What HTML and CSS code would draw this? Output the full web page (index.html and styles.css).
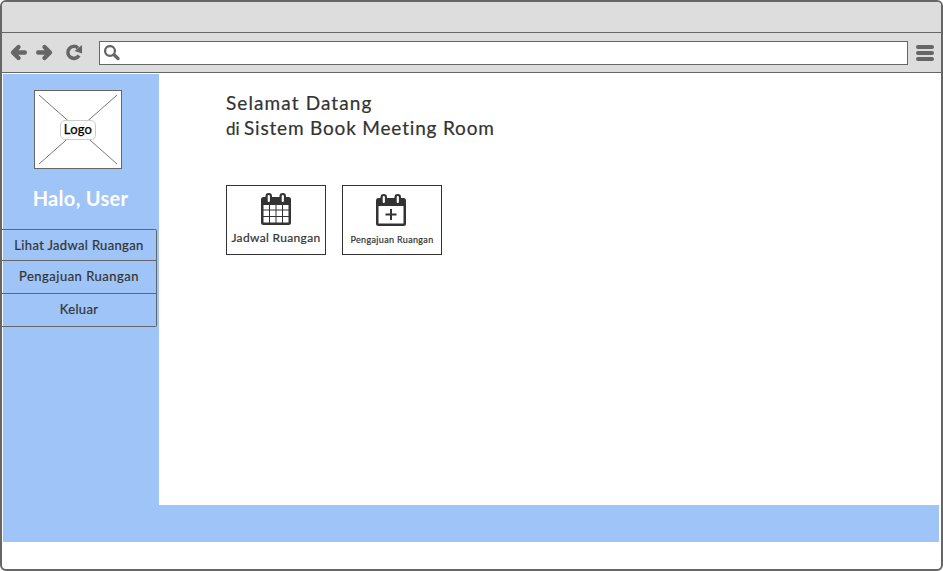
FILE: index.html
```html
<!DOCTYPE html>
<html lang="id">
<head>
<meta charset="utf-8">
<title>Sistem Book Meeting Room</title>
<link rel="stylesheet" href="styles.css">
</head>
<body>
<div class="window">
  <div class="titlebar"></div>
  <div class="toolbar">
    <svg class="nav" width="92" height="39" viewBox="0 0 92 39" fill="none" stroke="#666" stroke-width="4.400" stroke-linecap="round" stroke-linejoin="round">
      <path d="M16.500 14L11 19.500L16.500 25M11.500 19.500H22.800"/>
      <path d="M42.500 14L48 19.500L42.500 25M47.500 19.500H36.200"/>
      <path d="M76 15A6 6 0 1 0 77 22.500" stroke-width="3.500" stroke-linecap="butt"/>
      <path d="M80 12V20.500L72.500 18Z" fill="#666" stroke="none"/>
    </svg>
    <div class="address">
      <svg width="18" height="18" viewBox="0 0 18 18" fill="none" stroke="#666">
        <circle cx="6" cy="6" r="4.900" stroke-width="2.300"/>
        <path d="M10 9.800L14 13.500" stroke-width="3.400" stroke-linecap="round"/>
      </svg>
    </div>
    <div class="burger"><span></span><span></span><span></span></div>
  </div>
  <div class="page">
    <aside class="sidebar">
      <div class="logo">
        <svg class="cross" width="86" height="77" viewBox="0 0 86 77" stroke="#777" stroke-width="1"><path d="M4 4L82 73M82 4L4 73"/></svg>
        <span class="logo-label">Logo</span>
      </div>
      <h2 class="greeting">Halo, User</h2>
      <nav class="menu">
        <a class="item item-schedule">Lihat Jadwal Ruangan</a>
        <a class="item item-request">Pengajuan Ruangan</a>
        <a class="item item-exit">Keluar</a>
      </nav>
    </aside>
    <main class="content">
      <h1 class="welcome"><span class="line1">Selamat Datang</span><span class="line2"><span class="di">di</span><span class="name">Sistem Book Meeting Room</span></span></h1>
      <div class="cards">
        <div class="card">
          <svg width="32" height="34" viewBox="0 0 32 34">
            <rect x="1" y="4" width="30" height="28" rx="2.500" fill="#333"/>
            <path d="M3.500 12h5.500v4.500H3.500zM10 12h5.500v4.500H10zM16.500 12H22v4.500h-5.500zM23 12h5.500v4.500H23zM3.500 17.500H9v5.500H3.500zM10 17.500h5.500v5.500H10zM16.500 17.500H22v5.500h-5.500zM23 17.500h5.500v5.500H23zM3.500 24H9v5.500H3.500zM10 24h5.500v5.500H10zM16.500 24H22v5.500h-5.500zM23 24h5.500v5.500H23z" fill="#fff"/>
            <rect x="5.500" y="0" width="6.500" height="10" rx="3.200" fill="#333"/><rect x="19.500" y="0" width="6.500" height="10" rx="3.200" fill="#333"/>
            <path d="M8.800 3v5M22.800 3v5" stroke="#fff" stroke-width="2.200" stroke-linecap="round"/>
          </svg>
          <span class="label">Jadwal Ruangan</span>
        </div>
        <div class="card card-request">
          <svg width="32" height="34" viewBox="0 0 32 34">
            <rect x="1" y="4" width="30" height="28" rx="2.500" fill="#333"/>
            <path d="M3.500 12h25v17.500h-25z" fill="#fff"/>
            <path d="M16 15v11M10.500 20.500h11" stroke="#333" stroke-width="2"/>
            <rect x="5.500" y="0" width="6.500" height="10" rx="3.200" fill="#333"/><rect x="19.500" y="0" width="6.500" height="10" rx="3.200" fill="#333"/>
            <path d="M8.800 3v5M22.800 3v5" stroke="#fff" stroke-width="2.200" stroke-linecap="round"/>
          </svg>
          <span class="label label-small">Pengajuan Ruangan</span>
        </div>
      </div>
    </main>
    <footer class="footer"></footer>
  </div>
</div>
</body>
</html>
```
FILE: styles.css
```css
* { box-sizing: border-box; }
body { margin: 0; background: #fff; color: #333; font-family: Lato, "Liberation Sans", sans-serif; font-weight: 400; }
svg { display: block; flex: none; }
.window { width: 943px; height: 571px; border: 2px solid #666; border-radius: 6px; overflow: hidden; }
.titlebar { height: 31px; background: #ddd; border-bottom: 1px solid #666; }
.toolbar { height: 40px; display: flex; align-items: center; background: #ddd; border-bottom: 1px solid #666; }
.nav { margin-right: 5px; }
.address { width: 809px; height: 24px; background: #fff; border: 1px solid #666; padding: 3px 4px; }
.burger { display: flex; flex-direction: column; gap: 2px; margin: 1px 0 0 8px; }
.burger span { width: 18px; height: 4px; border-radius: 2px; background: #666; }
.page { display: grid; grid-template-columns: 156px 1fr; grid-template-rows: 431px 37px; padding: 1px 2px 0 1px; }
.sidebar { background: #9fc4f7; padding-top: 16px; }
.logo { width: 88px; height: 79px; margin-left: 31px; background: #fff; border: 1px solid #666; display: grid; place-items: center; }
.cross, .logo-label { grid-area: 1 / 1; }
.logo-label { z-index: 1; width: 36px; height: 20px; border: 1px solid #ccc; border-radius: 5px; background: rgba(255, 255, 255, .85); color: #000; font-size: 13px; line-height: 16px; letter-spacing: .2px; text-align: center; -webkit-text-stroke: .25px; }
.greeting { margin: 17px 0 19px; padding-right: 1px; height: 24px; line-height: 24px; text-align: center; color: #fff; font-size: 20px; font-weight: 700; letter-spacing: .3px; }
.menu { width: 155px; margin-left: -1px; border: 1px solid #666; border-left: 0; border-radius: 0 2px 2px 0; }
.item { display: block; height: 33px; line-height: 31px; text-align: center; font-size: 13px; letter-spacing: .35px; border-bottom: 1px solid #666; -webkit-text-stroke: .2px; }
.item-schedule { height: 31px; }
.item-request { letter-spacing: .5px; }
.item-exit { height: 32px; border-bottom: 0; }
.content { padding: 16px 0 0 67px; }
.welcome { margin: 0; font-size: 19px; font-weight: 400; line-height: 25px; -webkit-text-stroke: .2px; }
.line1, .line2 { display: block; white-space: nowrap; }
.line1 { letter-spacing: 1.100px; }
.di { display: inline-block; width: 18px; font-size: 17px; }
.name { letter-spacing: .82px; }
.cards { display: flex; gap: 16px; margin-top: 44px; }
.card { width: 100px; height: 70px; border: 1px solid #333; display: flex; flex-direction: column; align-items: center; padding-top: 7px; }
.card-request { padding-top: 8px; padding-right: 2px; }
.card-request .label { padding-left: 2px; }
.label { font-size: 12px; line-height: 16px; margin-top: 3px; letter-spacing: .35px; white-space: nowrap; -webkit-text-stroke: .2px; }
.label-small { font-size: 9px; letter-spacing: .35px; margin-top: 4px; }
.footer { grid-column: 1 / 3; background: #9fc4f7; }
```
